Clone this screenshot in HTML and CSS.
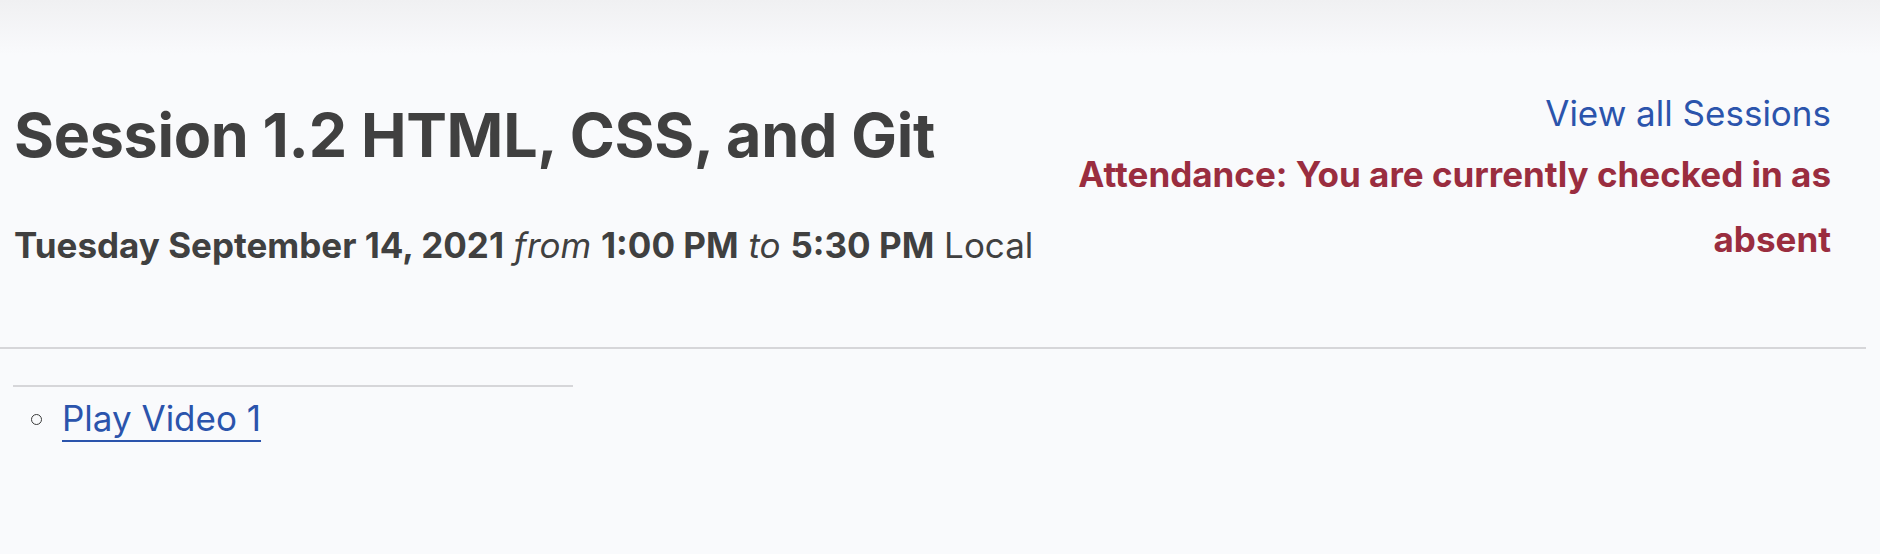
FILE: index.html
```html
<!DOCTYPE html>
<html lang="en">
<head>
<meta charset="utf-8">
<title>Session 1.2 HTML, CSS, and Git</title>
<link rel="stylesheet" href="styles.css">
</head>
<body>
<div class="topshade"></div>
<main class="page">
  <header class="session-head">
    <div class="info">
      <h1 class="title">Session 1.2 HTML, CSS, and Git</h1>
      <p class="when"><b>Tuesday September 14, 2021</b> <i>from</i> <b>1:00 PM</b> <i>to</i> <b>5:30 PM</b> Local</p>
    </div>
    <div class="side">
      <a class="all" href="#">View all Sessions</a>
      <p class="attendance">Attendance: You are currently checked in as absent</p>
    </div>
  </header>
  <hr class="rule">
  <section class="videos">
    <hr class="rule-short">
    <ul class="video-list">
      <li><a href="#">Play Video 1</a></li>
    </ul>
  </section>
</main>
</body>
</html>
```
FILE: styles.css
```css
html, body {
  margin: 0;
  padding: 0;
}
body {
  background: #f9fafc;
  font-family: Inter, "Noto Sans", sans-serif;
  color: #404040;
  min-height: 554px;
  position: relative;
}
.topshade {
  position: absolute;
  left: 0;
  top: 0;
  right: 0;
  height: 55px;
  background: linear-gradient(to bottom, #f0f0f2, rgba(249, 250, 252, 0));
  pointer-events: none;
}
.page {
  width: 1866px;
  padding-top: 91px;
}
.session-head {
  display: flex;
  justify-content: space-between;
  align-items: flex-start;
  padding: 0 35px 0 14px;
}
.title {
  margin: 9px 0 0;
  font-size: 61px;
  font-weight: 700;
  line-height: 70px;
  color: #404040;
  letter-spacing: -0.3px;
}
.when {
  margin: 53px 0 0;
  font-size: 35px;
  line-height: 44px;
  color: #404040;
}
.when b {
  font-weight: 700;
}
.when i {
  font-style: italic;
}
.side {
  display: flex;
  flex-direction: column;
  align-items: flex-end;
  text-align: right;
  width: 760px;
}
.all {
  color: #2b54ac;
  text-decoration: none;
  font-size: 35px;
  line-height: 44px;
}
.attendance {
  margin: 7px 0 0;
  color: #9a2d3f;
  font-weight: 700;
  font-size: 35px;
  line-height: 65px;
}
.rule {
  border: 0;
  height: 2px;
  background: #d6d6d9;
  margin: 75px 0 0;
}
.videos {
  padding-left: 13px;
}
.rule-short {
  border: 0;
  height: 2px;
  background: #d6d6d9;
  width: 560px;
  margin: 36px 0 0;
}
.video-list {
  margin: 9px 0 0;
  padding-left: 49px;
  list-style: none;
  font-size: 35px;
  line-height: 44px;
}
.video-list li {
  position: relative;
}
.video-list li::before {
  content: "";
  position: absolute;
  left: -31px;
  top: 18px;
  width: 9px;
  height: 9px;
  border: 1.6px solid #3a3a3a;
  border-radius: 50%;
}
.video-list a {
  color: #2b54ac;
  text-decoration: underline;
  text-decoration-thickness: 2px;
  text-underline-offset: 9px;
}
```
